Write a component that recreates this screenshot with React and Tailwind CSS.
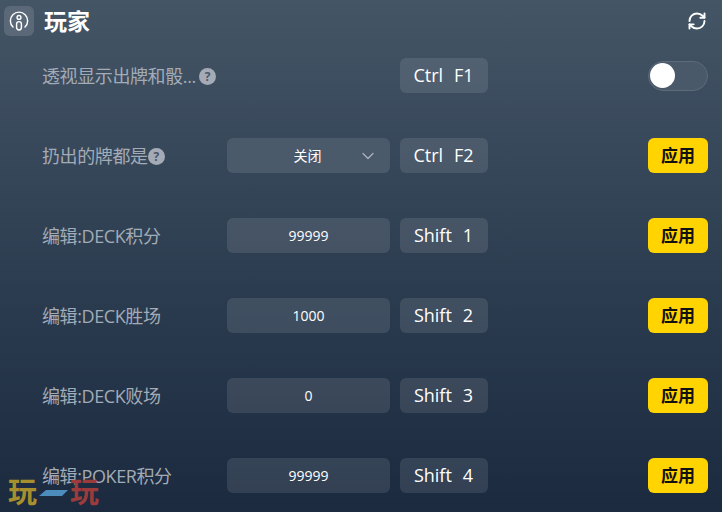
import { RefreshCw, ChevronDown } from "lucide-react";

const font = { fontFamily: '"Open Sans", "Noto Sans CJK SC", sans-serif' };

const rows = [
  { label: "透视显示出牌和骰...", help: true, helpGap: true, keys: ["Ctrl", "F1"], toggle: true },
  { label: "扔出的牌都是", help: true, select: "关闭", keys: ["Ctrl", "F2"] },
  { label: "编辑:DECK积分", value: "99999", keys: ["Shift", "1"] },
  { label: "编辑:DECK胜场", value: "1000", keys: ["Shift", "2"] },
  { label: "编辑:DECK败场", value: "0", keys: ["Shift", "3"] },
  { label: "编辑:POKER积分", value: "99999", keys: ["Shift", "4"] },
];

const Help = ({ gap }) => (
  <span className={`w-[17px] h-[17px] rounded-full bg-[#a5abb6] text-[#4a5667] text-[12px] font-bold leading-[17px] text-center shrink-0 ${gap ? "ml-[3px]" : ""}`}>
    ?
  </span>
);

const Row = ({ row }) => (
  <div className="flex items-center h-[35px] pl-[42px] pr-[14px]">
    <div className="w-[185px] flex items-center pt-[1px] text-[18px] tracking-[-0.4px] text-[#a3abb6] whitespace-nowrap">
      <span>{row.label}</span>
      {row.help && <Help gap={row.helpGap} />}
    </div>
    <div className="w-[163px] h-[35px]">
      {row.select && (
        <div className="relative h-full rounded-md bg-[#4a5a6b] text-white text-[14px] flex items-center justify-center pr-[2px]">
          {row.select}
          <ChevronDown size={20} strokeWidth={1.5} className="absolute right-[12px] text-[#aab2bc]" />
        </div>
      )}
      {row.value && (
        <div className="h-full rounded-md bg-[#ffffff1a] text-white text-[14px] font-medium flex items-center justify-center">
          {row.value}
        </div>
      )}
    </div>
    <div className="ml-[10px] w-[88px] h-[35px] rounded-md bg-[#ffffff1a] text-white text-[18px] flex items-center justify-center gap-[11px] pr-[1px]">
      <span>{row.keys[0]}</span>
      <span>{row.keys[1]}</span>
    </div>
    <div className="ml-auto w-[60px]">
      {row.toggle ? (
        <div className="h-[30px] rounded-full bg-[#4a5969] border border-[#5d6b7b] flex items-center pl-[1px]">
          <span className="w-[25px] h-[25px] rounded-full bg-white" />
        </div>
      ) : (
        <button className="w-full h-[35px] rounded-md bg-[#ffd400] text-[#111] text-[17px] font-semibold">应用</button>
      )}
    </div>
  </div>
);

export default function App() {
  return (
    <div className="relative w-[722px] h-[512px] overflow-hidden bg-gradient-to-b from-[#445566] to-[#1b2a3f]" style={font}>
      <div className="flex items-center h-[30px] mt-[6px] pl-[4px] pr-[14px]">
        <div className="w-[30px] h-[30px] rounded-md bg-[#5a6877] flex items-center justify-center">
          <svg width="24" height="24" viewBox="0 0 20 20" fill="none" stroke="white" strokeWidth="1.2" strokeLinecap="round">
            <path d="M5 15 A7.2 7.2 0 1 1 15 15" />
            <circle cx="10" cy="7" r="1.6" />
            <rect x="8" y="10.5" width="4" height="7" rx="2" />
          </svg>
        </div>
        <h1 className="ml-[10px] text-[23px] font-bold text-white">玩家</h1>
        <RefreshCw size={20} strokeWidth={2.3} className="ml-auto text-white mr-[1px]" />
      </div>
      <div className="flex flex-col gap-[45px] mt-[22px]">
        {rows.map((row, idx) => (
          <Row key={idx} row={row} />
        ))}
      </div>
      <div className="absolute left-[8px] top-[477px] w-[91px] h-[30px] flex items-center justify-between text-[29px] leading-[30px] font-bold">
        <span className="text-[#a88f2e]">玩</span>
        <svg width="29" height="7" viewBox="0 0 29 7" className="mt-[2px]">
          <polygon points="7,0 29,0 23,6 0,6" fill="#4d8dbd" />
        </svg>
        <span className="text-[#9c3b3c]">玩</span>
      </div>
    </div>
  );
}
